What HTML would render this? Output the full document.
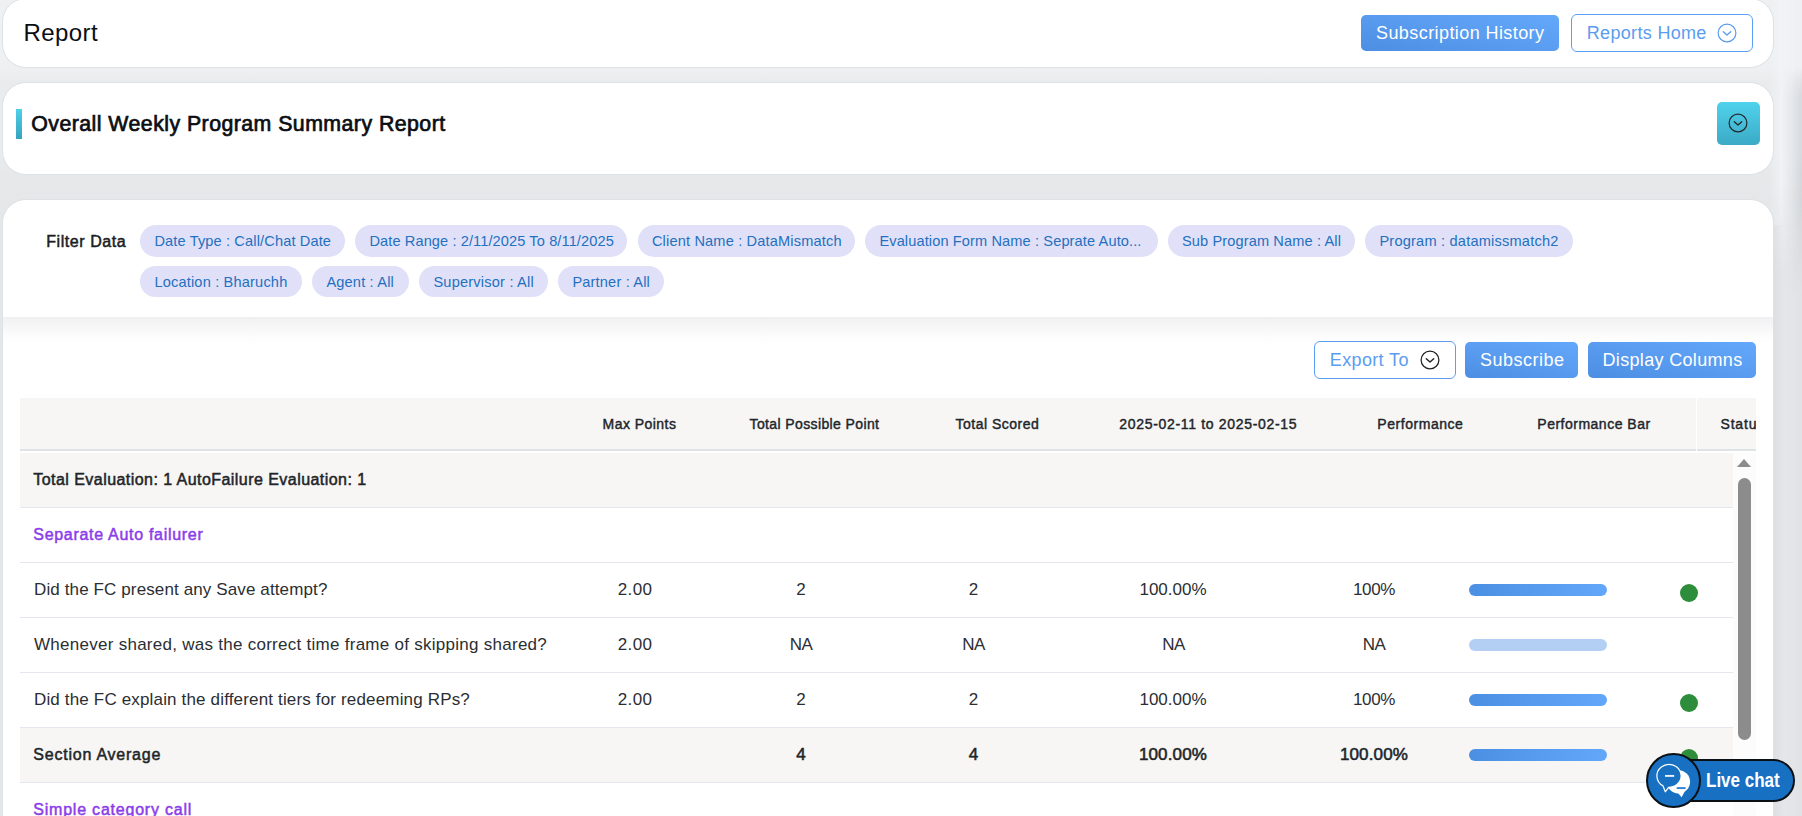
<!DOCTYPE html>
<html lang="en">
<head>
<meta charset="utf-8">
<title>Report</title>
<style>
*{box-sizing:border-box;margin:0;padding:0}
html,body{width:1802px;height:816px;overflow:hidden}
body{background:#e4e6e9;font-family:"Liberation Sans",sans-serif;color:#212529;position:relative}
.abs{position:absolute}
.card{position:absolute;left:2.4px;width:1771.3px;background:#fff;border:1px solid #dde2e5;border-radius:24px}
#c1{top:-2px;height:70px}
#c2{top:82px;height:93px}
#c3{top:199px;height:700px;border-radius:24px}
h1{position:absolute;left:23.4px;top:18px;font-size:24px;font-weight:400;line-height:30px;color:#0b0e13;letter-spacing:.45px;white-space:nowrap}
h2{position:absolute;left:31.3px;top:109.5px;font-size:21.3px;font-weight:400;-webkit-text-stroke:.7px #0b0e13;line-height:28px;color:#0b0e13;letter-spacing:.46px;white-space:nowrap}
.bar{position:absolute;left:16px;top:109px;width:6px;height:30px;background:linear-gradient(180deg,#4fd0ea,#36a3bd)}
.btn{position:absolute;display:flex;align-items:center;border-radius:5px;font-size:18px;white-space:nowrap;line-height:22px}
.btn.solid{background:linear-gradient(192deg,#63a8fa 0%,#5a9df1 45%,#4c8ee2 100%);color:#fff}
.btn.line{background:#fff;border:1px solid #5b9ef3;color:#5b9cf1;border-radius:6px}
.btn svg{position:absolute;display:block}
.cy{position:absolute;left:1717px;top:102px;width:43px;height:43px;border-radius:5px;background:linear-gradient(180deg,#50d2ec,#3baac6)}
.cy svg{position:absolute;left:11.2px;top:11.2px}
.flabel{position:absolute;left:46.3px;top:231.5px;font-size:16px;font-weight:400;-webkit-text-stroke:.5px;line-height:20px;color:#1a1d21;letter-spacing:.55px;white-space:nowrap}
.chip{position:absolute;height:31.500px;border-radius:16px;background:#e0e1f8;color:#2470c0;font-size:14.600px;line-height:32.500px;padding-left:14.4px;white-space:nowrap}
.r1{top:225.250px}.r2{top:266px;height:31px;line-height:32px}
.fshadow{position:absolute;left:3px;top:317px;width:1770px;height:28px;background:linear-gradient(180deg,#f0f0f2 0,#f7f7f8 35%,#fdfdfd 75%,#fff 100%)}
.thead{position:absolute;left:20px;top:398px;width:1736px;height:53px;background:#f7f6f5;border-bottom:2px solid #dee3e6;overflow:hidden}
.th{position:absolute;top:1px;height:51px;line-height:51px;font-size:14px;font-weight:400;-webkit-text-stroke:.42px;color:#212529;white-space:nowrap}
.row{position:absolute;left:20px;width:1713px;height:55px;border-bottom:1px solid #e5e7f0;font-size:17px;line-height:53px;color:#2b2e33}
.row.g{background:#f7f6f5}
.row span{position:absolute;top:0;white-space:nowrap}
.row .c{text-align:center;transform:translateX(-50%)}
.row b{font-weight:400;-webkit-text-stroke:.55px;color:#212529}
.row .h{font-size:16px;font-weight:400;-webkit-text-stroke:.5px;color:#212529;left:13.3px}
.row .p{font-size:16px;font-weight:400;-webkit-text-stroke:.5px;color:#8b3dea;left:13.3px}
.pbar{position:absolute;left:1449px;top:21px;width:138px;height:12px;border-radius:6px;background:linear-gradient(100deg,#4b8fe3 0%,#5a9ef2 60%,#62a7f9 100%)}
.pbar.na{background:#b3d0f4}
.dot{position:absolute;left:1660px;top:21px;width:18px;height:18px;border-radius:50%;background:#2e8d3b}
</style>
</head>
<body>
<div class="abs" style="left:0;top:0;width:1802px;height:816px;background:linear-gradient(180deg,#eef0f2 0,#eef0f2 68px,#e9ebed 82px,#e9ebed 150px,#e6e8ea 175px,#e5e7e9 199px,#e4e6e8 290px,#e4e6e8 816px)"></div>
<div class="abs" style="left:1768px;top:0;width:34px;height:280px;background:linear-gradient(90deg,rgba(241,243,245,0) 0,rgba(241,243,245,.85) 40%,rgba(241,243,245,.6) 65%,rgba(241,243,245,0) 100%);-webkit-mask-image:linear-gradient(180deg,#000 0,#000 185px,transparent 275px);mask-image:linear-gradient(180deg,#000 0,#000 185px,transparent 275px)"></div>
<div class="abs" style="left:1782px;top:66px;width:20px;height:750px;background:linear-gradient(90deg,rgba(70,88,110,0) 0,rgba(70,88,110,.03) 40%,rgba(70,88,110,.11) 100%);-webkit-mask-image:linear-gradient(180deg,transparent 0,#000 30px,#000 140px,rgba(0,0,0,.2) 230px,rgba(0,0,0,.2) 100%);mask-image:linear-gradient(180deg,transparent 0,#000 30px,#000 140px,rgba(0,0,0,.2) 230px,rgba(0,0,0,.2) 100%)"></div>
<div class="abs" style="left:1774px;top:225px;width:10px;height:591px;background:linear-gradient(90deg,rgba(60,70,85,.045),rgba(60,70,85,0))"></div>
<div class="card" id="c1"></div>
<div class="card" id="c2"></div>
<div class="card" id="c3"></div>

<h1>Report</h1>
<div class="btn solid" style="left:1361px;top:15px;width:198px;height:36px;padding-left:15px;letter-spacing:.42px">Subscription History</div>
<div class="btn line" style="left:1571px;top:14px;width:182px;height:38px;padding-left:14.8px;letter-spacing:.32px">Reports Home
<svg style="left:144.6px;top:7.6px" width="20" height="20" viewBox="0 0 20 20"><circle cx="10" cy="10" r="8.900" fill="none" stroke="#5b9cf1" stroke-width="1.200"/><path d="M6.300 8.700 L10 12.100 L13.700 8.700" fill="none" stroke="#5b9cf1" stroke-width="1.350" stroke-linecap="round" stroke-linejoin="round"/></svg></div>

<div class="bar"></div>
<h2>Overall Weekly Program Summary Report</h2>
<div class="cy"><svg width="20" height="20" viewBox="0 0 20 20"><circle cx="10" cy="10" r="8.900" fill="none" stroke="#25292d" stroke-width="1.200"/><path d="M6.300 8.700 L10 12.100 L13.700 8.700" fill="none" stroke="#25292d" stroke-width="1.350" stroke-linecap="round" stroke-linejoin="round"/></svg></div>

<div class="flabel">Filter Data</div>
<div class="chip r1" style="left:140px;width:205px;letter-spacing:.13px">Date Type : Call/Chat Date</div>
<div class="chip r1" style="left:355px;width:272px;letter-spacing:.1px">Date Range : 2/11/2025 To 8/11/2025</div>
<div class="chip r1" style="left:637.500px;width:217.500px;letter-spacing:.16px">Client Name : DataMismatch</div>
<div class="chip r1" style="left:865px;width:293px;letter-spacing:.11px">Evaluation Form Name : Seprate Auto...</div>
<div class="chip r1" style="left:1167.500px;width:187.500px;letter-spacing:.12px">Sub Program Name : All</div>
<div class="chip r1" style="left:1365px;width:207.500px;letter-spacing:.2px">Program : datamissmatch2</div>
<div class="chip r2" style="left:140px;width:162px;letter-spacing:.17px">Location : Bharuchh</div>
<div class="chip r2" style="left:312px;width:97px;letter-spacing:.17px">Agent : All</div>
<div class="chip r2" style="left:419px;width:129px;letter-spacing:.2px">Supervisor : All</div>
<div class="chip r2" style="left:558px;width:106px;letter-spacing:.17px">Partner : All</div>
<div class="fshadow"></div>

<div class="btn line" style="left:1314px;top:341px;width:142px;height:38px;padding-left:14.8px;letter-spacing:.36px">Export To
<svg style="left:105px;top:8px" width="20" height="20" viewBox="0 0 20 20"><circle cx="10" cy="10" r="8.900" fill="none" stroke="#202124" stroke-width="1.250"/><path d="M6.300 8.700 L10 12.100 L13.700 8.700" fill="none" stroke="#202124" stroke-width="1.400" stroke-linecap="round" stroke-linejoin="round"/></svg></div>
<div class="btn solid" style="left:1465px;top:342px;width:113px;height:36px;padding-left:15px;letter-spacing:.49px">Subscribe</div>
<div class="btn solid" style="left:1588px;top:342px;width:168px;height:36px;padding-left:14.500px;letter-spacing:.33px">Display Columns</div>

<div class="thead">
<div class="th" style="left:582.500px;letter-spacing:0.47px">Max Points</div>
<div class="th" style="left:729.500px;letter-spacing:0.385px">Total Possible Point</div>
<div class="th" style="left:935.500px;letter-spacing:0.5px">Total Scored</div>
<div class="th" style="left:1099.300px;letter-spacing:0.676px">2025-02-11 to 2025-02-15</div>
<div class="th" style="left:1357.300px;letter-spacing:0.544px">Performance</div>
<div class="th" style="left:1517.300px;letter-spacing:0.498px">Performance Bar</div>
<div class="th" style="left:1700.500px;letter-spacing:0.82px">Status</div>
</div>

<div class="abs" style="left:1696px;top:398px;width:1.3px;height:53px;background:#fff"></div>
<div class="row g" style="top:453px"><span class="h" style="letter-spacing:0.448px">Total Evaluation: 1 AutoFailure Evaluation: 1</span></div>
<div class="row" style="top:508px"><span class="p" style="letter-spacing:0.7px">Separate Auto failurer</span></div>
<div class="row" style="top:563px"><span style="left:14px;letter-spacing:.12px">Did the FC present any Save attempt?</span><span class="c" style="left:615px;letter-spacing:.4px">2.00</span><span class="c" style="left:781px">2</span><span class="c" style="left:953.500px">2</span><span class="c" style="left:1153px">100.00%</span><span class="c" style="left:1354px;letter-spacing:-.4px">100%</span><div class="pbar"></div><div class="dot"></div></div>
<div class="row" style="top:618px"><span style="left:14px;letter-spacing:.27px">Whenever shared, was the correct time frame of skipping shared?</span><span class="c" style="left:615px;letter-spacing:.4px">2.00</span><span class="c" style="left:781px;letter-spacing:-.5px">NA</span><span class="c" style="left:953.500px;letter-spacing:-.5px">NA</span><span class="c" style="left:1153.500px;letter-spacing:-.5px">NA</span><span class="c" style="left:1354px;letter-spacing:-.5px">NA</span><div class="pbar na"></div></div>
<div class="row" style="top:673px"><span style="left:14px;letter-spacing:.16px">Did the FC explain the different tiers for redeeming RPs?</span><span class="c" style="left:615px;letter-spacing:.4px">2.00</span><span class="c" style="left:781px">2</span><span class="c" style="left:953.500px">2</span><span class="c" style="left:1153px">100.00%</span><span class="c" style="left:1354px;letter-spacing:-.4px">100%</span><div class="pbar"></div><div class="dot"></div></div>
<div class="row g" style="top:728px"><span class="h" style="letter-spacing:0.77px">Section Average</span><span class="c" style="left:781px"><b>4</b></span><span class="c" style="left:953.500px"><b>4</b></span><span class="c" style="left:1153px"><b style="letter-spacing:.15px">100.00%</b></span><span class="c" style="left:1354px"><b style="letter-spacing:.15px">100.00%</b></span><div class="pbar"></div><div class="dot"></div></div>
<div class="row" style="top:783px"><span class="p" style="letter-spacing:0.78px">Simple category call</span></div>

<!-- inner scrollbar -->
<div class="abs" style="left:1733px;top:453px;width:23px;height:363px;background:#fcfcfc"></div>
<div class="abs" style="left:1737px;top:459px;width:0;height:0;border-left:7.500px solid transparent;border-right:7.500px solid transparent;border-bottom:8px solid #8b8b8b"></div>
<div class="abs" style="left:1738px;top:478px;width:13px;height:262px;border-radius:6.500px;background:#8c8c8c"></div>

<!-- live chat -->
<div class="abs" style="left:1662px;top:759px;width:133px;height:43px;border-radius:21.5px;background:#1770c2;border:2.2px solid #0b1015"></div>
<div class="abs" style="left:1705.7px;top:768.6px;font-size:19.6px;font-weight:700;color:#fff;line-height:24px;white-space:nowrap;transform:translateY(-.6px) scaleX(.868);transform-origin:0 50%">Live chat</div>
<div class="abs" style="left:1646px;top:753px;width:55.2px;height:55.2px;border-radius:50%;background:#1770c2;border:2.3px solid #0b1015"></div>
<svg class="abs" style="left:1644px;top:750px" width="60" height="60" viewBox="1644 750 60 60">
<ellipse cx="1678.4" cy="781.8" rx="11.7" ry="11.6" fill="#fff"/>
<path d="M1685 791 L1681.6 797.2 L1677.5 792.5 Z" fill="#fff"/>
<path d="M1668.58 787.29 A12.1 11.4 0 1 0 1662.95 785.77 L1665.3 791.8 Z" fill="#1770c2" stroke="#fff" stroke-width="1.2" stroke-linejoin="round"/>
<path d="M1665 775.9 H1674.2" stroke="#fff" stroke-width="1.9" opacity=".92"/>
<path d="M1676.7 788.1 H1685.6" stroke="#2a7fd0" stroke-width="1.9"/>
</svg>
</body>
</html>
